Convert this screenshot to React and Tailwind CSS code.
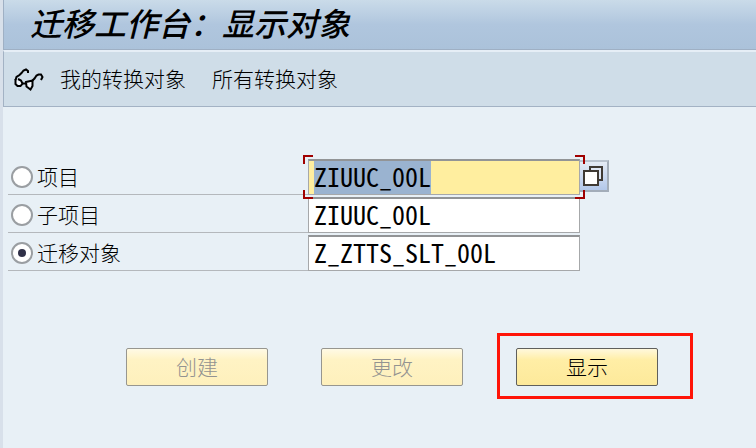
import { useEffect, useRef } from "react";

const rows = [
  { id: "project", label: "项目", value: "ZIUUC_00L" },
  { id: "subproject", label: "子项目", value: "ZIUUC_00L" },
  { id: "object", label: "迁移对象", value: "Z_ZTTS_SLT_00L" },
];

const GlassesIcon = () => (
  <svg width="30" height="24" viewBox="0 0 30 24" fill="none" stroke="#000" strokeWidth="2" aria-hidden="true">
    <path d="M1.5 12 V17 L3.5 19 H6.5 L8.5 16.5 L7 13.5 L4 12" fill="#f2f6fc" />
    <path d="M12 15 L18.5 13.5 V19 L16.5 22.5 L12.5 19.5 Z" fill="#f2f6fc" />
    <path d="M1.5 13 L2.5 10 L5.5 8 L7.5 6 L9.5 3.5 L12 2.5 L14 4 V6" />
    <path d="M18.5 13.5 L20.5 11.5 L22.5 8.5 L24.5 7.5 H27 L28.5 10 L27 13" />
    <path d="M8.5 16.5 H12" />
  </svg>
);

const MatchIcon = () => (
  <svg width="20" height="20" viewBox="0 0 20 20" stroke="#3f3a34" strokeWidth="2" aria-hidden="true">
    <path d="M7 1 H19 V14 H7 Z" fill="#dfe7f5" />
    <path d="M1 5 H15 V19 H1 Z" fill="#fff" />
  </svg>
);

const FocusCorners = () => (
  <div className="pointer-events-none absolute -inset-x-[5px] -inset-y-1">
    <span className="absolute left-0 top-0 h-[9px] w-[10px] border-l-2 border-t-2 border-[#a00000]" />
    <span className="absolute right-0 top-0 h-[9px] w-[10px] border-r-2 border-t-2 border-[#a00000]" />
    <span className="absolute bottom-0 left-0 h-[9px] w-[10px] border-b-2 border-l-2 border-[#a00000]" />
    <span className="absolute bottom-0 right-0 h-[9px] w-[10px] border-b-2 border-r-2 border-[#a00000]" />
  </div>
);

const Row = ({ row, active, inputRef }) => (
  <div className={active ? "relative z-10 flex h-9" : "flex h-9"}>
    <label className="flex w-[300px] items-center gap-1 border-b border-[#b4b8bc] pl-[3px]">
      <input
        type="radio"
        name="kind"
        value={row.id}
        defaultChecked={row.id === "object"}
        className="grid size-[22px] appearance-none place-items-center rounded-full border-2 border-[#9a9ea2] bg-white checked:before:size-2 checked:before:rounded-full checked:before:bg-[#2f3048]"
      />
      <span className="pb-0.5">{row.label}</span>
    </label>
    <div className="relative w-[272px]">
      <input
        ref={inputRef}
        type="text"
        aria-label={row.label}
        defaultValue={row.value}
        className={
          "h-full w-full border border-t-2 border-[#a6a8aa] border-t-[#929496] px-[5px] pb-1 font-['Noto_Sans_Mono_CJK_SC','Liberation_Mono',monospace] text-[26px] leading-[26px] outline-none selection:bg-[#9ab3d0] selection:text-black " +
          (active ? "bg-[#ffee9f]" : "bg-white")
        }
      />
      {active && <FocusCorners />}
    </div>
    {active && (
      <button
        type="button"
        aria-label="选择"
        className="mt-px flex h-8 w-[29px] items-center border-2 border-l-0 border-[#a3adb9] border-t-[#b9c3cf] bg-linear-to-b from-[#e4ebf5] to-[#b3c8ea] pl-[3px]"
      >
        <MatchIcon />
      </button>
    )}
  </div>
);

const ActionButton = ({ children, disabled }) => (
  <button
    type="button"
    disabled={disabled}
    className="h-[38px] w-[142px] rounded-xs border border-[#5f5f5c] bg-linear-to-b from-[#fff8dc] via-[#ffeea6] via-30% to-[#fde99a] pb-0.5 disabled:border-[#97968f] disabled:from-[#fffae6] disabled:via-[#fff3c4] disabled:to-[#fef0bc] disabled:text-[#939391]"
  >
    {children}
  </button>
);

const App = () => {
  const first = useRef(null);

  useEffect(() => {
    first.current.focus();
    first.current.select();
  }, []);

  return (
    <div className="min-h-screen border-l-[3px] border-[#d8e0ea] bg-[#e8f0f6] font-['Noto_Sans_CJK_SC',sans-serif] text-[21px] leading-7 font-light text-black">
      <header className="h-[50px] border-b border-l border-[#9fb0c4] bg-linear-to-b from-[#cadbe9] via-[#b0c6de] via-50% to-[#abc2da] pl-[26px]">
        <h1 className="text-[32px] leading-[44px] font-medium italic">迁移工作台：显示对象</h1>
      </header>
      <nav className="flex h-[57px] items-center border-b border-l border-t-2 border-[#a3b2c4] border-t-[#e6eef6] bg-[#cfdde8] pl-[10px]">
        <button type="button" aria-label="显示" className="mr-4">
          <GlassesIcon />
        </button>
        <button type="button" className="mr-[26px] pb-0.5">我的转换对象</button>
        <button type="button" className="pb-0.5">所有转换对象</button>
      </nav>
      <main className="pl-[5px] pt-[52px]">
        <div className="flex flex-col gap-0.5">
          {rows.map((row, i) => (
            <Row key={row.id} row={row} active={i === 0} inputRef={i === 0 ? first : null} />
          ))}
        </div>
        <div className="mt-[62px] flex items-start pl-[118px]">
          <div className="mr-[53px] pt-[15px]">
            <ActionButton disabled>创建</ActionButton>
          </div>
          <div className="mr-[34px] pt-[15px]">
            <ActionButton disabled>更改</ActionButton>
          </div>
          <div className="border-[3px] border-[#ff1508] pt-3 pr-8 pb-2.5 pl-4">
            <ActionButton>显示</ActionButton>
          </div>
        </div>
      </main>
    </div>
  );
};

export default App;
